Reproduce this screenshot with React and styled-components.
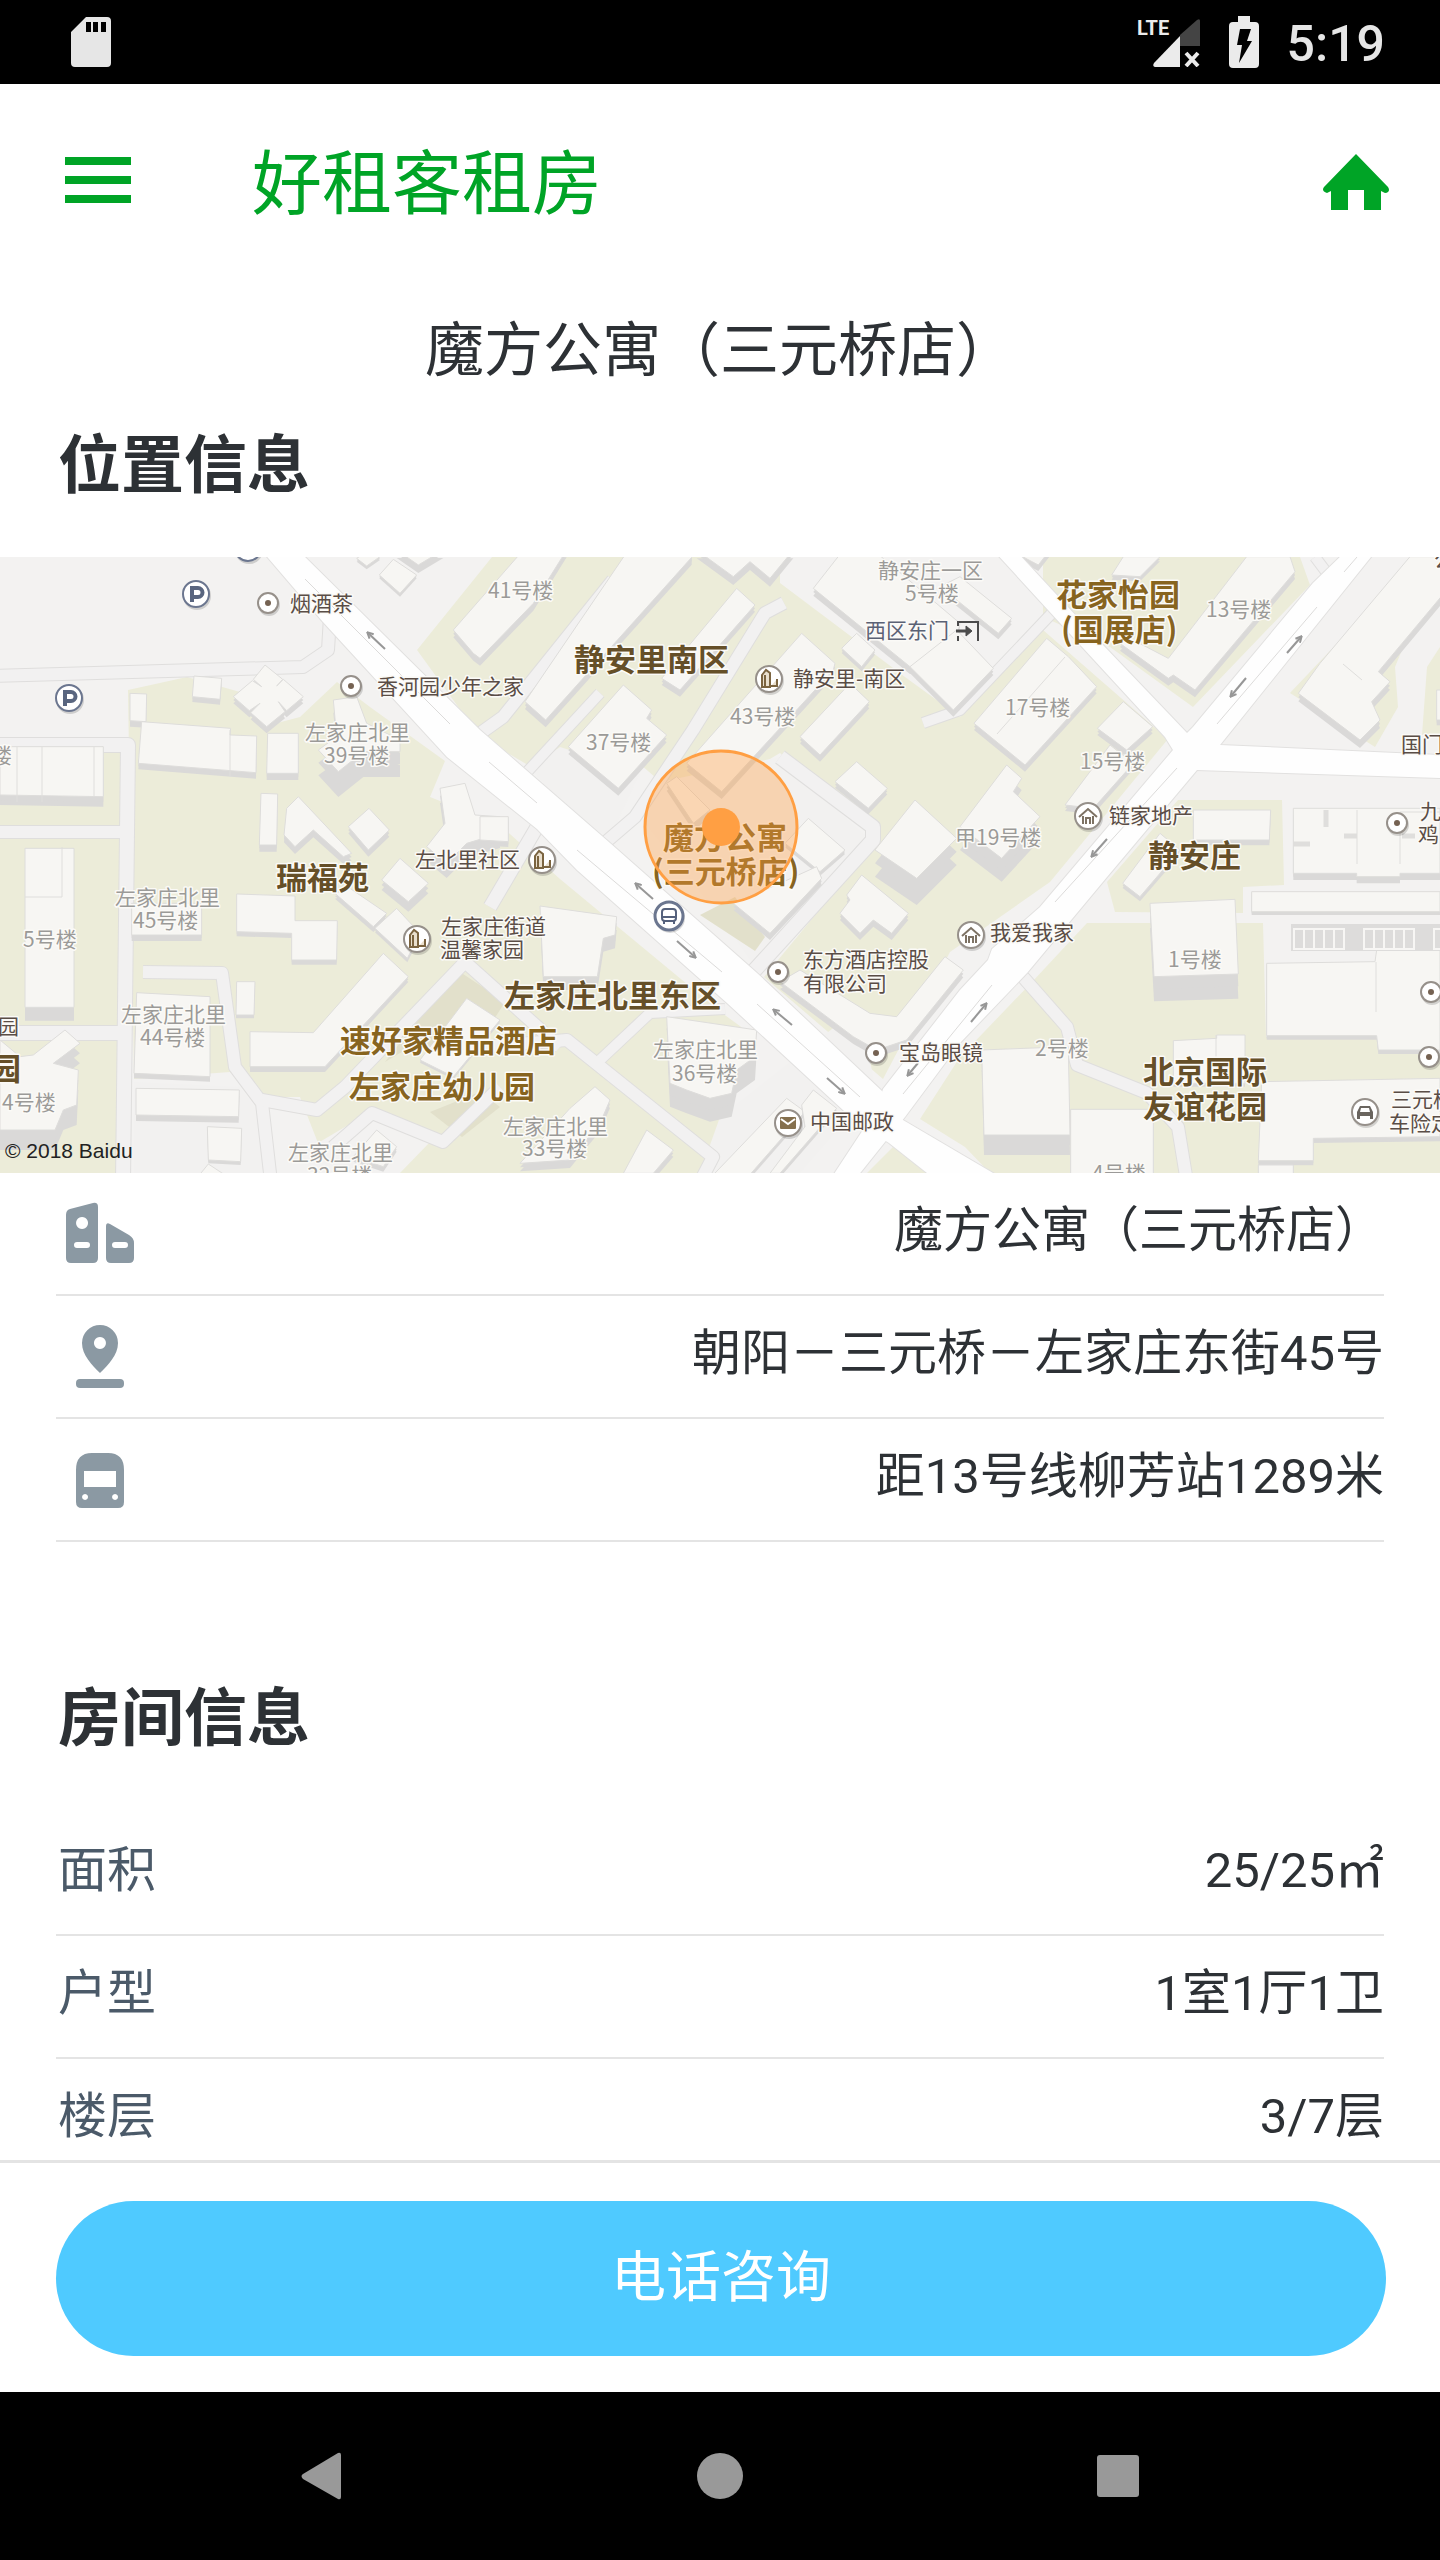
import React from "react";
import styled, { createGlobalStyle } from "styled-components";

const GlobalStyle = createGlobalStyle`
  * {
    box-sizing: border-box;
  }

  body {
    margin: 0;
    background: #fff;
    color: #2d3135;
    font-family: Roboto, "Noto Sans CJK SC", sans-serif;
  }
`;

// Every tile is drawn on a 1440 wide grid and shown at a third of that size.
// A block is [wall height, roof outline].
const tiles = [
  {
    x: 0,
    y: -7,
    blocks: [
      [18, "390,430 440,432 438,515 390,512"],
      [18, "425,515 692,535 690,555 770,558 768,668 415,640"],
      [16, "582,378 665,385 660,448 577,440"],
      [20, "795,345 848,388 830,408 850,388 910,440 860,482 835,455 855,485 800,530 752,488 780,460 748,482 700,440 757,392 785,410 760,388"],
      [20, "803,550 895,550 895,670 800,670"],
      [76, "1000,450 1070,440 1100,520 1200,570 1200,605 1090,605 1015,665 955,600 1010,560"],
      [30, "0,590 310,590 310,740 0,735"],
      [20, "783,730 833,732 830,885 778,885"],
      [22, "895,740 1055,910 1030,920 940,840 885,890 852,855 860,775"],
      [20, "1107,775 1168,840 1105,900 1045,830"],
      [40, "75,895 222,895 222,1372 75,1372"],
      [44, "1320,715 1395,700 1425,795 1500,800 1500,850 1400,880 1340,940 1280,890 1335,820"],
      [30, "1200,925 1285,1000 1225,1055 1145,990"],
      [10, "1180,28 1250,75 1200,130 1138,75"],
      [10, "1070,25 1110,0 1140,20 1100,48"],
      [24, "1190,0 1330,0 1255,45"],
    ],
  },
  {
    x: 480,
    y: -7,
    blocks: [
      [22, "-80,240 130,0 260,0 160,160 0,325 -20,310"],
      [22, "445,0 635,0 635,22 197,510 135,455"],
      [20, "770,115 825,165 600,420 545,385"],
      [25, "650,0 940,0 870,85 810,35 760,80"],
      [22, "1090,0 1180,0 1440,220 1420,305 1290,350 1000,115"],
      [20, "1290,350 1430,240 1540,355 1420,480"],
      [14, "1130,250 1185,300 1145,350 1085,295"],
      [22, "430,405 515,480 500,505 560,555 415,715 265,590"],
      [22, "965,250 1065,340 1060,360 725,725 620,640"],
      [20, "1110,400 1168,455 1020,615 960,560"],
      [18, "1130,635 1222,715 1165,775 1065,695"],
      [80, "1305,750 1430,865 1310,985 1185,900"],
      [16, "0,800 85,800 85,875 0,870"],
      [12, "985,805 1095,900 1020,965 915,880"],
      [22, "560,700 590,680 690,780 640,820"],
      [20, "900,1000 1010,950 1025,985 870,1150 760,1060"],
    ],
  },
  {
    x: 960,
    y: -7,
    blocks: [
      [18, "0,80 155,205 115,250 -60,110"],
      [18, "150,0 270,0 235,45"],
      [20, "260,265 325,320 410,410 195,645 42,520"],
      [20, "490,455 578,530 500,600 412,535"],
      [18, "450,585 520,640 400,775 315,765"],
      [70, "140,645 185,685 160,725 240,800 125,925 0,830"],
      [22, "860,20 990,20 1005,65 705,420 640,375 625,385 480,280 500,260 625,325"],
      [14, "490,20 600,20 540,80 455,75"],
      [24, "1350,20 1460,20 1460,120 1255,365 1290,395 1235,455 1260,510 1200,570 1015,430 1080,340"],
      [16, "1430,420 1500,420 1500,510 1430,510"],
      [16, "700,780 932,780 928,870 700,870"],
      [20, "1000,775 1440,775 1440,970 1320,970 1320,980 1190,980 1190,970 1000,970"],
      [14, "600,850 660,900 540,1040 488,1000"],
    ],
  },
  {
    x: 0,
    y: 313,
    blocks: [
      [18, "395,100 605,100 605,195 395,195"],
      [14, "710,72 885,78 885,152 1012,152 1010,270 875,270 875,190 710,185"],
      [10, "710,335 765,335 762,435 708,435"],
      [15, "410,368 630,380 630,620 402,610"],
      [16, "750,485 940,488 1150,250 1225,320 975,590 750,590"],
      [18, "408,655 718,660 716,740 408,735"],
      [10, "622,770 725,775 722,875 625,870"],
      [14, "625,882 690,925 590,925"],
      [60, "0,510 60,560 100,555 195,480 240,520 160,580 235,600 230,705 190,720 165,780 0,780"],
      [16, "1050,55 1160,130 1120,170 1005,70"],
      [12, "1190,115 1260,190 1222,265 1125,175"],
      [8, "1400,385 1500,450 1360,620 1260,570"],
      [15, "1130,780 1190,830 1150,890 1060,860"],
    ],
  },
  {
    x: 480,
    y: 313,
    blocks: [
      [40, "180,108 410,140 405,195 370,205 352,320 190,320"],
      [70, "560,440 830,480 825,560 770,600 755,670 690,685 620,660 570,640"],
      [20, "1145,15 1285,130 1235,190 1180,150 1140,190 1080,130 1110,90 1100,75"],
      [22, "1395,260 1450,300 1280,510 1190,540 1120,500 900,335 960,300 1170,430 1250,440"],
      [24, "345,650 390,690 360,760 270,870 120,880 270,715"],
      [20, "500,780 580,840 520,910 430,910"],
      [12, "920,685 975,725 800,925 690,925"],
      [12, "1000,660 1070,715 900,910 870,910 975,770 965,705"],
    ],
  },
  {
    x: 960,
    y: 313,
    blocks: [
      [74, "570,100 825,88 835,312 582,320"],
      [10, "875,65 1440,65 1440,125 875,125"],
      [12, "920,280 1245,275 1250,240 1440,240 1440,540 1255,540 1250,497 920,497"],
      [10, "640,512 770,505 770,495 855,495 855,640 640,640"],
      [14, "905,635 1440,625 1440,800 1060,805 1060,872 895,872"],
      [60, "65,540 325,530 330,795 72,795"],
      [0, "332,718 580,718 580,925 332,925"],
      [0, "895,885 1000,885 1000,925 895,925"],
    ],
  },
];

const greens = [
  "0,190 122,190 118,616 0,616",
  "128,133 187,120 240,135 262,170 300,160 337,125 370,150 445,204 430,240 500,268 560,322 722,456 755,480 700,616 400,616 430,585 370,555 318,586 300,540 262,540 230,515 134,522",
  "417,93 492,0 780,0 780,26 905,120 960,160 1043,73 1168,182 1050,325 950,395 883,522 764,420 830,340 880,285 780,196 690,250 620,190 545,218 480,180",
  "1043,0 1300,0 1310,28 1193,150 1110,90 1043,60",
  "1290,136 1400,20 1440,0 1395,110 1398,150 1375,190",
  "1427,110 1440,90 1440,178 1422,178",
  "1107,325 1178,243 1282,243 1284,328 1243,330 1243,356 1115,355",
  "1087,366 1263,366 1266,480 1440,480 1440,616 990,616 965,590 920,562 960,500 1032,425",
  "893,590 930,616 867,616",
];

// courtyards that are neither lawn nor building
const yards = [
  "134,525 240,530 262,560 262,616 134,616",
  "530,210 560,190 640,215 610,280 575,262",
  "640,260 660,225 780,200 870,283 755,410 720,360",
  "720,560 860,450 875,530 800,616 700,616",
];

const khakis = [
  "457,413 505,445 470,500 410,490 385,505",
  "430,555 480,535 500,550 462,580",
  "735,340 765,380 755,394 700,358",
];

const lanes = [
  [12, "-5,119 303,110 328,93 330,60"],
  [14, "-5,188 128,188 123,625"],
  [12, "-5,275 125,275"],
  [14, "-5,476 120,476"],
  [12, "143,415 222,416 235,510 262,546 271,625"],
  [12, "262,543 317,553 345,530 465,405 560,490"],
  [12, "333,590 372,556 443,585 500,530"],
  [12, "480,490 567,483 713,600 700,625"],
  [10, "600,503 650,456 725,452"],
  [13, "537,270 490,350"],
  [12, "784,46 765,56 693,173 635,260 600,290"],
  [12, "613,23 503,160 475,180"],
  [10, "600,136 527,215"],
  [14, "780,200 873,270 873,283 753,415"],
  [10, "1052,56 960,153 923,166"],
  [12, "1023,420 1067,470 1077,508 1147,536 1178,570 1187,625"],
  [10, "1315,0 1330,20"],
];

const roads = [
  "263,-5 300,-5 480,173 610,286 757,416 883,535 903,563 993,616 927,616 889,586 857,566 727,446 577,313 537,272 447,200 323,65",
  "1345,-5 1375,-5 1220,188 1197,213 1107,320 1027,416 960,486 905,560 857,620 832,620 878,550 883,532 960,433 988,403 992,392 1040,350 1173,193 1187,176 1193,170 1313,26",
  "995,-5 1017,-5 1103,88 1187,176 1220,188 1440,198 1440,221 1197,213 1173,193 1165,180 1060,66",
];

const dividers = [
  "305,22 450,167",
  "489,205 537,246",
  "577,293 722,415",
  "757,447 860,540",
  "1357,0 1344,15",
  "1317,50 1217,167",
  "1177,211 1055,345",
  "992,428 903,537",
];

const arrows = [
  [385, 92, 368, 76],
  [653, 342, 636, 327],
  [677, 384, 695, 400],
  [792, 468, 774, 453],
  [827, 521, 844, 536],
  [918, 506, 908, 518],
  [1287, 96, 1301, 80],
  [1246, 121, 1231, 139],
  [1107, 282, 1092, 299],
  [971, 465, 986, 447],
];

const labels = [
  ["house", 488, 34, "41号楼"],
  ["house", 586, 186, "37号楼"],
  ["house", 730, 160, "43号楼"],
  ["house", 305, 176, "左家庄北里"],
  ["house", 324, 199, "39号楼"],
  ["house", -9, 199, "楼"],
  ["house", 878, 14, "静安庄一区"],
  ["house", 905, 37, "5号楼"],
  ["house", 1206, 53, "13号楼"],
  ["house", 1005, 151, "17号楼"],
  ["house", 1080, 205, "15号楼"],
  ["house", 955, 281, "甲19号楼"],
  ["house", 115, 341, "左家庄北里"],
  ["house", 133, 364, "45号楼"],
  ["house", 23, 383, "5号楼"],
  ["house", 2, 546, "4号楼"],
  ["house", 121, 458, "左家庄北里"],
  ["house", 140, 481, "44号楼"],
  ["house", 288, 596, "左家庄北里"],
  ["house", 307, 619, "32号楼"],
  ["house", 503, 570, "左家庄北里"],
  ["house", 522, 592, "33号楼"],
  ["house", 653, 493, "左家庄北里"],
  ["house", 672, 517, "36号楼"],
  ["house", 1168, 403, "1号楼"],
  ["house", 1035, 492, "2号楼"],
  ["house", 1092, 617, "4号楼"],
  ["poi", 290, 47, "烟酒茶"],
  ["poi", 377, 130, "香河园少年之家"],
  ["poi", 415, 303, "左北里社区"],
  ["poi", 793, 122, "静安里-南区"],
  ["gate", 865, 74, "西区东门"],
  ["poi", 1109, 259, "链家地产"],
  ["poi", 1401, 188, "国门"],
  ["poi", 1420, 255, "九"],
  ["poi", 1418, 278, "鸡"],
  ["poi", 1434, 3, "公"],
  ["poi", -2, 470, "园"],
  ["poi", 441, 370, "左家庄街道"],
  ["poi", 440, 393, "温馨家园"],
  ["poi", 803, 403, "东方酒店控股"],
  ["poi", 803, 427, "有限公司"],
  ["poi", 810, 565, "中国邮政"],
  ["poi", 899, 496, "宝岛眼镜"],
  ["poi", 990, 376, "我爱我家"],
  ["poi", 1391, 543, "三元桥"],
  ["poi", 1389, 567, "车险定"],
  ["estate", 574, 104, "静安里南区"],
  ["estate", 1148, 300, "静安庄"],
  ["estate", 276, 322, "瑞福苑"],
  ["estate", -10, 513, "园"],
  ["estate", 504, 440, "左家庄北里东区"],
  ["estate", 1143, 516, "北京国际"],
  ["estate", 1143, 551, "友谊花园"],
  ["place", 1056, 39, "花家怡园"],
  ["place", 1061, 74, "(国展店)"],
  ["place", 340, 485, "速好家精品酒店"],
  ["place", 349, 531, "左家庄幼儿园"],
  ["place", 663, 282, "魔方公寓"],
  ["place", 652, 316, "(三元桥店)"],
];

const labelStyles = {
  house: { size: 21, color: "#9b9a98", weight: 400 },
  poi: { size: 21, color: "#5a4d46", weight: 400 },
  gate: { size: 21, color: "#5b6275", weight: 400 },
  estate: { size: 31, color: "#654f28", weight: 700 },
  place: { size: 31, color: "#87641f", weight: 700 },
};

const markers = [
  ["dot", 268, 46],
  ["dot", 351, 129],
  ["dot", 778, 415],
  ["dot", 876, 496],
  ["dot", 1397, 266],
  ["dot", 1431, 435],
  ["dot", 1429, 500],
  ["parking", 196, 37],
  ["parking", 69, 141],
  ["parking", 248, -9],
  ["estate", 769, 122],
  ["estate", 542, 303],
  ["estate", 417, 382],
  ["agent", 1088, 259],
  ["agent", 971, 378],
  ["bus", 669, 359],
  ["mail", 788, 566],
  ["car", 1365, 555],
];

const MarkerGlyph = ({ kind }) => {
  switch (kind) {
    case "parking":
      return <path d="M-4 8V-6H2a4 4 0 0 1 0 9H-4" fill="none" stroke="#59657f" strokeWidth="4" />;
    case "estate":
      return (
        <path d="M-7 8V-4l4-5 4 3V8zM-4 7V-4M2 7H8V0" fill="#e9dfcd" stroke="#7b6440" strokeWidth="2" />
      );
    case "agent":
      return (
        <path d="M-9 1 0-7 9 1M-5 0V8M5 0V8M-2 8V2H2V8" fill="none" stroke="#7d7264" strokeWidth="2" />
      );
    case "bus":
      return (
        <g fill="none" stroke="#55617c" strokeWidth="2">
          <rect x="-7" y="-7" width="14" height="12" rx="3" />
          <path d="M-7 1H7M-5 5V8M5 5V8" />
        </g>
      );
    case "mail":
      return (
        <g>
          <rect x="-8" y="-6" width="16" height="12" rx="1" fill="#85704e" />
          <path d="M-7-4 0 1 7-4" fill="none" stroke="#fff" strokeWidth="2" />
        </g>
      );
    case "car":
      return (
        <g fill="#6a655f">
          <path d="M-5-6H5L8 0V7H5V4H-5V7H-8V0zM-4-4-5 0H5L4-4z" fillRule="evenodd" />
        </g>
      );
    default:
      return <circle r="3" fill="#756252" />;
  }
};

const Marker = ({ kind, x, y }) => {
  const navy = kind === "parking" || kind === "bus";
  const radius = kind === "dot" ? 10 : kind === "bus" ? 14 : 13;

  return (
    <g transform={`translate(${x} ${y})`}>
      <circle cx="1" cy="2" r={radius + 1} fill="#000" opacity="0.15" />
      <circle
        r={radius}
        fill="#fff"
        stroke={navy ? "#6b768f" : "#96908a"}
        strokeWidth={kind === "bus" ? 3 : 2}
      />
      <MarkerGlyph kind={kind} />
    </g>
  );
};

const TileLayer = ({ render }) =>
  tiles.map((tile) => (
    <g key={`${tile.x}-${tile.y}`} transform={`translate(${tile.x} ${tile.y}) scale(0.33333)`}>
      {tile.blocks.map(([wall, points]) => render(wall, points))}
    </g>
  ));

const LocationMap = () => (
  <MapDrawing viewBox="0 0 1440 616" role="img" aria-label="魔方公寓（三元桥店）地图">
    <defs>
      <marker id="tip" viewBox="0 0 8 8" refX="6" refY="4" markerWidth="4" markerHeight="4" orient="auto">
        <path d="M1 1 7 4 1 7" fill="none" stroke="#979797" strokeWidth="2" />
      </marker>
    </defs>
    <rect width="1440" height="616" fill="#f3f2f1" />
    {greens.map((points) => (
      <polygon key={points} points={points} fill="#ececd9" />
    ))}
    {yards.map((points) => (
      <polygon key={points} points={points} fill="#f2f1f0" />
    ))}
    {khakis.map((points) => (
      <polygon key={points} points={points} fill="#e2e0cb" />
    ))}

    <g fill="none" strokeLinejoin="round">
      {lanes.map(([width, points]) => (
        <polyline key={points} points={points} stroke="#dfdedd" strokeWidth={width + 2} />
      ))}
      {lanes.map(([width, points]) => (
        <polyline key={points} points={points} stroke="#f2f1f1" strokeWidth={width} />
      ))}
    </g>

    <TileLayer
      render={(wall, points) => (
        <g key={points} fill="#dad9d8">
          <polygon points={points} transform={`translate(0 ${wall})`} />
          <polygon points={points} transform={`translate(0 ${wall / 2})`} />
          <polygon points={points} fill="#f7f6f3" stroke="#dedddb" strokeWidth="3" />
        </g>
      )}
    />

    <g stroke="#dfdedc" fill="none">
      <path d="M230 173V220M17 190V245M42 190V245M94 190V240M997 177 1065 100M25 340H62V290M1343 107 1362 123" />
      <path d="M1293 287H1310M1326 253V270M1344 279H1357M1402 279H1415" strokeWidth="5" />
      <path d="M1357 253V307M1400 307V255H1440M1376 405V455M1216 478V525" />
    </g>
    <rect x="1291" y="367" width="149" height="27" fill="#dddcdb" />
    <g fill="none" stroke="#f7f6f4" strokeWidth="2">
      <path d="M1294 372H1344V392H1294zM1304 372V392M1314 372V392M1324 372V392M1334 372V392" />
      <path d="M1364 372H1414V392H1364zM1374 372V392M1384 372V392M1394 372V392M1404 372V392" />
      <path d="M1440 372H1434V392H1440" />
    </g>

    <g stroke="#e2e1e0" strokeWidth="2">
      {roads.map((points) => (
        <polygon key={points} points={points} />
      ))}
    </g>
    {roads.map((points) => (
      <polygon key={points} points={points} fill="#fefefe" />
    ))}
    <g fill="none" stroke="#dcdbda">
      {dividers.map((points) => (
        <polyline key={points} points={points} />
      ))}
    </g>
    <g stroke="#979797" strokeWidth="2">
      {arrows.map(([x1, y1, x2, y2]) => (
        <line key={`${x1}-${y1}`} x1={x1} y1={y1} x2={x2} y2={y2} markerEnd="url(#tip)" />
      ))}
    </g>

    {labels.map(([kind, x, y, text]) => {
      const { size, color, weight } = labelStyles[kind];
      return (
        <MapLabel
          key={`${x}-${y}`}
          x={x}
          y={y + Math.round(size * 0.32)}
          fill={color}
          fontSize={size}
          fontWeight={weight}
        >
          {text}
        </MapLabel>
      );
    })}
    {markers.map(([kind, x, y]) => (
      <Marker key={`${x}-${y}`} kind={kind} x={x} y={y} />
    ))}
    <g fill="none" stroke="#4b4b4b" strokeWidth="2">
      <path d="M958 69V65H978V84M958 79V84" />
      <path d="M956 74H970" strokeWidth="3" />
      <path d="M966 69 972 74 966 79z" fill="#4b4b4b" strokeWidth="1" />
    </g>

    <circle cx="721" cy="270" r="76" fill="#ff9f43" fillOpacity="0.36" stroke="#ff9f43" strokeWidth="3" />
    <circle cx="721" cy="270" r="19" fill="#ff9f43" />
    <Copyright x="5" y="601">
      © 2018 Baidu
    </Copyright>
  </MapDrawing>
);

const BuildingIcon = () => (
  <RowIcon viewBox="0 0 80 80" aria-label="小区">
    <path
      fillRule="evenodd"
      d="M6 19q0-5 4-6L33 7q5-1 5 4V62q0 5-5 5H11q-5 0-5-5zM22 21a6 6 0 1 0 0.1 0zM17 46a3 3 0 0 0 0 6H27a3 3 0 0 0 0-6zM46 30q0-4 4-2L69 39q5 3 5 8V62q0 5-5 5H51q-5 0-5-5zM55 46a3 3 0 0 0 0 6H65a3 3 0 0 0 0-6z"
    />
  </RowIcon>
);

const PlaceIcon = () => (
  <RowIcon viewBox="0 0 80 80" aria-label="地址">
    <path
      fillRule="evenodd"
      d="M40 6a18 18 0 0 0-18 18C22 36 32 46 40 54 48 46 58 36 58 24A18 18 0 0 0 40 6zM40 18a6 6 0 1 1-0.1 0z"
    />
    <rect x="16" y="60" width="48" height="9" rx="4" />
  </RowIcon>
);

const SubwayIcon = () => (
  <RowIcon viewBox="0 0 80 80" aria-label="地铁">
    <path
      fillRule="evenodd"
      d="M16 28Q16 11 32 11H48Q64 11 64 28V60Q64 66 58 66H22Q16 66 16 60zM24 29V45H56V29zM25 52a3 3 0 1 0 0.1 0zM55 52a3 3 0 1 0 0.1 0z"
    />
  </RowIcon>
);

const locationRows = [
  { icon: <BuildingIcon />, value: "魔方公寓（三元桥店）" },
  { icon: <PlaceIcon />, value: "朝阳－三元桥－左家庄东街45号" },
  { icon: <SubwayIcon />, value: "距13号线柳芳站1289米" },
];

const roomRows = [
  { name: "面积", value: "25/25㎡" },
  { name: "户型", value: "1室1厅1卫" },
  { name: "楼层", value: "3/7层" },
];

const App = () => {
  return (
    <Screen>
      <GlobalStyle />
      <StatusBar>
        <svg width="40" height="50" viewBox="0 0 40 50" fill="#e6e6e6">
          <path
            fillRule="evenodd"
            d="M15 0H36a4 4 0 0 1 4 4V46a4 4 0 0 1-4 4H4a4 4 0 0 1-4-4V15zM15 5V15H20V5zM22 5V15H27V5zM30 5V15H35V5z"
          />
        </svg>
        <StatusGroup>
          <svg width="64" height="50" viewBox="0 0 64 50">
            <NetworkText x="0" y="18">
              LTE
            </NetworkText>
            <path d="M43 18 60 3q3-2 3 1V29H43z" fill="#444" />
            <path d="M43 19V50H18q-3-1-1-4z" fill="#ebebeb" />
            <path d="M49 36 61 49M61 36 49 49" stroke="#ebebeb" strokeWidth="4" />
          </svg>
          <svg width="30" height="52" viewBox="0 0 30 52" fill="#ebebeb">
            <path
              fillRule="evenodd"
              d="M9 0H21V6H26a4 4 0 0 1 4 4V48a4 4 0 0 1-4 4H4a4 4 0 0 1-4-4V10a4 4 0 0 1 4-4H9zM11 13 8 29H13L10 47 23 25H18L22 13z"
            />
          </svg>
          <Clock>5:19</Clock>
        </StatusGroup>
      </StatusBar>

      <Content>
        <Header>
          <IconButton aria-label="菜单">
            <svg width="66" height="66" viewBox="0 0 66 66" fill="#00a426">
              <rect y="8" width="66" height="8" />
              <rect y="27" width="66" height="8" />
              <rect y="46" width="66" height="8" />
            </svg>
          </IconButton>
          <Brand>好租客租房</Brand>
          <HomeLink href="#" aria-label="首页">
            <svg width="66" height="66" viewBox="0 0 66 66" fill="#00a426">
              <path d="M33 5 65 38q3 5-3 6l-4-2V61H41V41H25V61H8V42L4 44Q-2 42 1 38z" />
            </svg>
          </HomeLink>
        </Header>

        <Title>魔方公寓（三元桥店）</Title>

        <SectionTitle>位置信息</SectionTitle>
        <LocationMap />
        <RowList>
          {locationRows.map((row) => (
            <Row key={row.value}>
              <dt>{row.icon}</dt>
              <Value>{row.value}</Value>
            </Row>
          ))}
        </RowList>

        <SectionTitle $spaced>房间信息</SectionTitle>
        <RowList>
          {roomRows.map((row) => (
            <Row key={row.name}>
              <Name>{row.name}</Name>
              <Value>{row.value}</Value>
            </Row>
          ))}
        </RowList>
      </Content>

      <CallBar>
        <CallButton>电话咨询</CallButton>
      </CallBar>

      <NavBar>
        <NavButton aria-label="返回">
          <svg width="48" height="48" viewBox="0 0 48 48" fill="#999">
            <path d="M5 22 40 1q3-1 3 2V45q0 3-3 2L5 27q-3-3 0-5z" />
          </svg>
        </NavButton>
        <NavButton aria-label="主屏幕">
          <svg width="48" height="48" viewBox="0 0 48 48" fill="#999">
            <circle cx="24" cy="24" r="23" />
          </svg>
        </NavButton>
        <NavButton aria-label="最近任务">
          <svg width="48" height="48" viewBox="0 0 48 48" fill="#999">
            <rect x="3" y="3" width="42" height="42" rx="3" />
          </svg>
        </NavButton>
      </NavBar>
    </Screen>
  );
};

const Screen = styled.div`
  display: flex;
  flex-direction: column;
  height: 100vh;
`;

const StatusBar = styled.div`
  display: flex;
  justify-content: space-between;
  align-items: center;
  flex-shrink: 0;
  height: 84px;
  padding: 0 55px 0 71px;
  background: #000;
`;

const StatusGroup = styled.div`
  display: flex;
  align-items: center;
  gap: 28px;
`;

const NetworkText = styled.text`
  fill: #ebebeb;
  font: bold 20px Roboto, sans-serif;
`;

const Clock = styled.span`
  padding-top: 4px;
  color: #e6e6e6;
  font-size: 50px;
  font-weight: 500;
  line-height: 56px;
`;

const Content = styled.main`
  flex: 1;
  min-height: 0;
  overflow-y: auto;
  scrollbar-width: none;
`;

const Header = styled.header`
  display: flex;
  align-items: center;
  height: 196px;
  padding: 0 51px 0 65px;
`;

const IconButton = styled.button`
  display: flex;
  padding: 0;
  border: none;
  background: none;
  cursor: pointer;
`;

const Brand = styled.div`
  flex: 1;
  margin-left: 121px;
  padding-top: 6px;
  color: #00a426;
  font-size: 70px;
  line-height: 96px;
`;

const HomeLink = styled.a`
  display: flex;
`;

const Title = styled.h1`
  margin: 29px 0;
  font-size: 59px;
  font-weight: 400;
  line-height: 84px;
  text-align: center;
`;

const SectionTitle = styled.h2`
  margin: ${(props) => (props.$spaced ? "135px 58px 52px" : "31px 58px 49px")};
  font-size: 63px;
  font-weight: 700;
  line-height: 84px;
`;

const MapDrawing = styled.svg`
  display: block;
  width: 100%;
`;

const MapLabel = styled.text`
  font-family: "Noto Sans CJK SC", sans-serif;
  paint-order: stroke;
  stroke: #fbfaf7;
  stroke-width: 3px;
  stroke-linejoin: round;
`;

const Copyright = styled.text`
  fill: #222;
  font: 21px "Liberation Sans", sans-serif;
`;

const RowList = styled.dl`
  margin: 0 56px;
`;

const Row = styled.div`
  display: flex;
  justify-content: space-between;
  align-items: center;
  height: 123px;
  border-bottom: 2px solid #e4e4e4;
  font-size: 49px;
  line-height: 72px;
`;

const RowIcon = styled.svg`
  display: block;
  width: 80px;
  height: 80px;
  margin: 4px 0 0 4px;
  fill: #8b99a3;
`;

const Name = styled.dt`
  margin-left: 2px;
  padding-bottom: 6px;
  color: #4b5a69;
`;

const Value = styled.dd`
  margin: 0;
  padding-bottom: 6px;
`;

const CallBar = styled.div`
  flex-shrink: 0;
  padding: 38px 54px 36px 56px;
  border-top: 3px solid #e4e4e4;
  background: #fff;
`;

const CallButton = styled.button`
  display: block;
  width: 100%;
  height: 155px;
  padding: 0 0 14px;
  border: none;
  border-radius: 78px;
  background: #4fcaff;
  color: #fff;
  font-family: inherit;
  font-size: 55px;
  cursor: pointer;
`;

const NavBar = styled.nav`
  display: flex;
  justify-content: space-between;
  align-items: center;
  flex-shrink: 0;
  height: 168px;
  padding: 0 20%;
  background: #000;
`;

const NavButton = styled(IconButton)`
  margin: 0 10px;
`;

export default App;
